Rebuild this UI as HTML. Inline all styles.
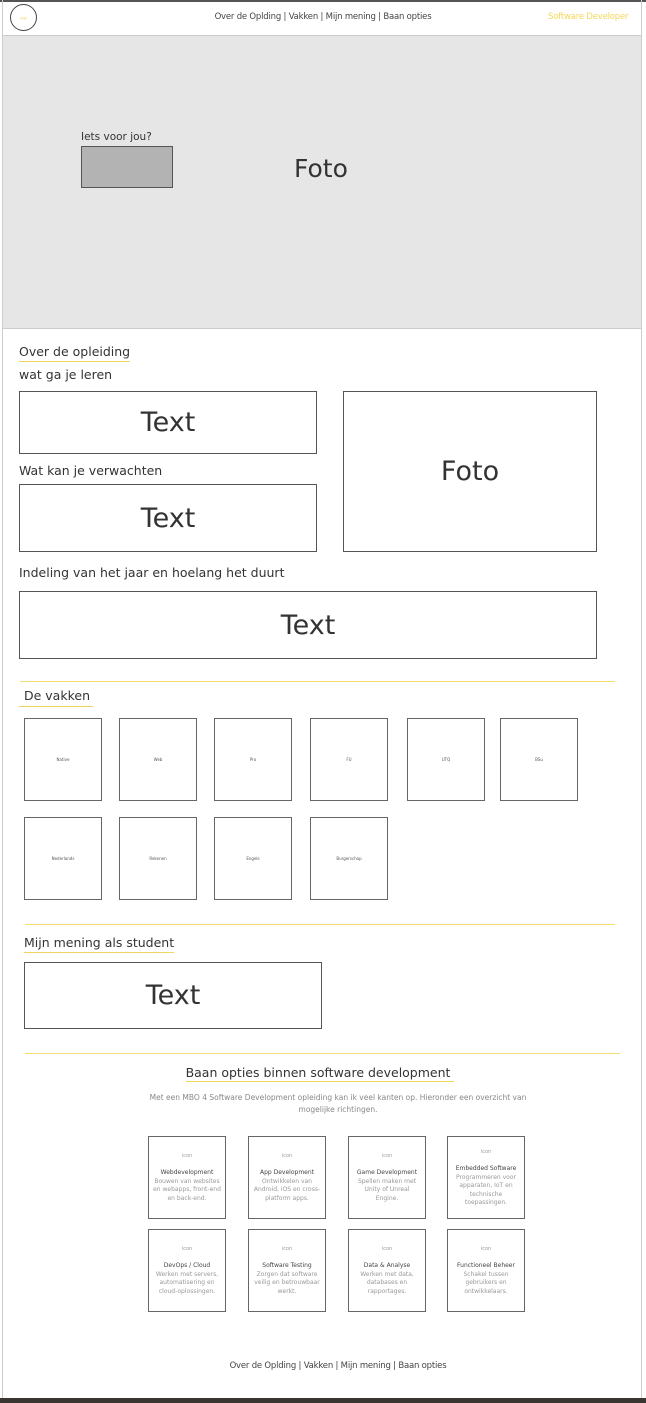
<!DOCTYPE html>
<html><head><meta charset="utf-8"><style>
*{margin:0;padding:0;box-sizing:border-box}
body{width:646px;height:1403px;position:relative;background:#fff;font-family:"DejaVu Sans","Liberation Sans",sans-serif;color:#333;overflow:hidden}
.a{position:absolute}
.box{position:absolute;border:1px solid #555;background:#fff;display:flex;align-items:center;justify-content:center}
.big{font-size:27px;color:#333}
.h{position:absolute;font-size:12.5px;color:#333;white-space:nowrap}
.ul{position:absolute;height:1px;background:#f3d75a}
.yl{position:absolute;height:1px;background:#f5dc72}
.v{position:absolute;width:78px;height:83px;border:1px solid #666;display:flex;align-items:center;justify-content:center;font-size:4px;color:#555}
.c{position:absolute;width:78px;height:83px;border:1px solid #666;text-align:center;font-size:6px;color:#999;line-height:8.5px;padding:0 4px;display:flex;flex-direction:column;justify-content:center}
.c b{font-weight:normal;color:#444;display:block}
.c i{font-style:normal;display:block;margin-bottom:9px;font-size:5px}
</style></head><body>
<div class="a" style="left:0;top:0;width:646px;height:2px;background:#555"></div>
<div class="a" style="left:2px;top:0;width:1px;height:1398px;background:#ccc"></div>
<div class="a" style="left:641px;top:0;width:1px;height:1398px;background:#ccc"></div>
<div class="a" style="left:3px;top:35px;width:639px;height:1px;background:#ccc"></div>
<div class="a" style="left:10px;top:4px;width:27px;height:27px;border:1px solid #444;border-radius:50%;font-size:3px;color:#e6c52a;display:flex;align-items:center;justify-content:center">Logo</div>
<div class="a" style="left:0;width:646px;top:12px;text-align:center;font-size:8.5px;color:#444;letter-spacing:-0.2px">Over de Oplding | Vakken | Mijn mening | Baan opties</div>
<div class="a" style="left:548px;top:12px;font-size:8.5px;color:#f3d75a;letter-spacing:-0.2px">Software Developer</div>

<div class="a" style="left:3px;top:36px;width:638px;height:293px;background:#e6e6e6;border-bottom:1px solid #ccc"></div>
<div class="a" style="left:81px;top:131px;font-size:10.5px;color:#333">Iets voor jou?</div>
<div class="a" style="left:81px;top:146px;width:92px;height:42px;background:#b3b3b3;border:1px solid #555"></div>
<div class="a" style="left:294px;top:154px;font-size:25px;color:#333">Foto</div>

<div class="h" style="left:19px;top:344px">Over de opleiding</div>
<div class="ul" style="left:19px;top:361px;width:111px"></div>
<div class="h" style="left:19px;top:367px">wat ga je leren</div>
<div class="box" style="left:19px;top:391px;width:298px;height:63px"><span class="big">Text</span></div>
<div class="h" style="left:19px;top:463px">Wat kan je verwachten</div>
<div class="box" style="left:19px;top:484px;width:298px;height:68px"><span class="big">Text</span></div>
<div class="box" style="left:343px;top:391px;width:254px;height:161px"><span class="big">Foto</span></div>
<div class="h" style="left:19px;top:565px">Indeling van het jaar en hoelang het duurt</div>
<div class="box" style="left:19px;top:591px;width:578px;height:68px"><span class="big">Text</span></div>

<div class="yl" style="left:20px;top:681px;width:595px"></div>
<div class="h" style="left:24px;top:688px">De vakken</div>
<div class="ul" style="left:19px;top:706px;width:74px"></div>
<div class="v" style="left:24px;top:718px">Native</div>
<div class="v" style="left:119px;top:718px">Web</div>
<div class="v" style="left:214px;top:718px">Pro</div>
<div class="v" style="left:310px;top:718px">FU</div>
<div class="v" style="left:407px;top:718px">UTQ</div>
<div class="v" style="left:500px;top:718px">BSu</div>
<div class="v" style="left:24px;top:817px">Nederlands</div>
<div class="v" style="left:119px;top:817px">Rekenen</div>
<div class="v" style="left:214px;top:817px">Engels</div>
<div class="v" style="left:310px;top:817px">Burgerschap</div>

<div class="yl" style="left:25px;top:924px;width:590px"></div>
<div class="h" style="left:24px;top:935px">Mijn mening als student</div>
<div class="ul" style="left:24px;top:952px;width:150px"></div>
<div class="box" style="left:24px;top:962px;width:298px;height:67px"><span class="big">Text</span></div>

<div class="yl" style="left:25px;top:1053px;width:595px"></div>
<div class="h" style="left:0;width:636px;text-align:center;top:1065px">Baan opties binnen software development</div>
<div class="ul" style="left:186px;top:1081px;width:268px"></div>
<div class="a" style="left:100px;width:476px;top:1092px;text-align:center;font-size:7.5px;color:#888;line-height:11.5px;white-space:nowrap">Met een MBO 4 Software Development opleiding kan ik veel kanten op. Hieronder een overzicht van<br>mogelijke richtingen.</div>

<div class="c" style="left:148px;top:1136px"><i>icon</i><b>Webdevelopment</b>Bouwen van websites en webapps, front-end en back-end.</div>
<div class="c" style="left:248px;top:1136px"><i>icon</i><b>App Development</b>Ontwikkelen van Android, iOS en cross-platform apps.</div>
<div class="c" style="left:348px;top:1136px"><i>icon</i><b>Game Development</b>Spellen maken met Unity of Unreal Engine.</div>
<div class="c" style="left:447px;top:1136px"><i>icon</i><b>Embedded Software</b>Programmeren voor apparaten, IoT en technische toepassingen.</div>
<div class="c" style="left:148px;top:1229px"><i>icon</i><b>DevOps / Cloud</b>Werken met servers, automatisering en cloud-oplossingen.</div>
<div class="c" style="left:248px;top:1229px"><i>icon</i><b>Software Testing</b>Zorgen dat software veilig en betrouwbaar werkt.</div>
<div class="c" style="left:348px;top:1229px"><i>icon</i><b>Data &amp; Analyse</b>Werken met data, databases en rapportages.</div>
<div class="c" style="left:447px;top:1229px"><i>icon</i><b>Functioneel Beheer</b>Schakel tussen gebruikers en ontwikkelaars.</div>

<div class="a" style="left:0;width:676px;top:1361px;text-align:center;font-size:8.5px;color:#444;letter-spacing:-0.2px">Over de Oplding | Vakken | Mijn mening | Baan opties</div>
<div class="a" style="left:0;top:1398px;width:646px;height:5px;background:#3a3530"></div>
</body></html>
